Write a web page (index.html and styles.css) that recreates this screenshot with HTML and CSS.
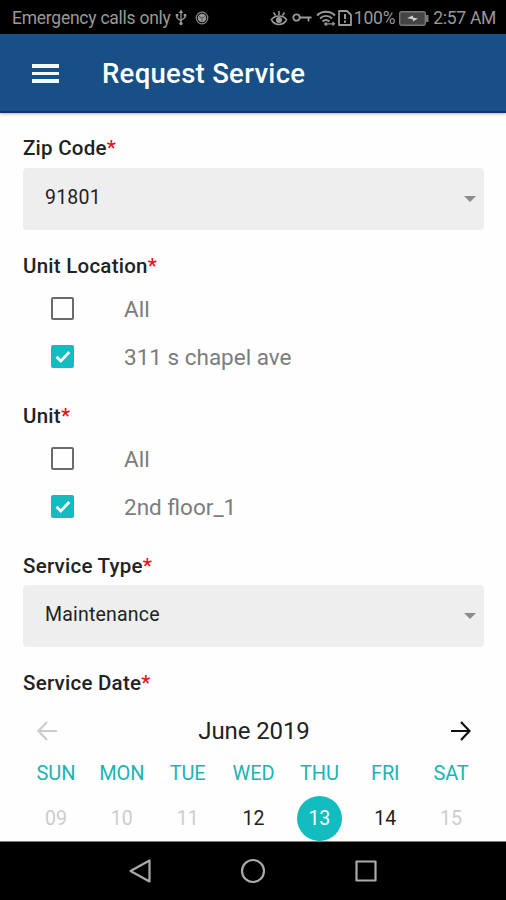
FILE: index.html
```html
<!DOCTYPE html>
<html lang="en">

<head>
    <meta charset="utf-8">
    <title>Request Service</title>
    <link rel="stylesheet" href="styles.css">
</head>

<body>
    <div class="status-bar">
        <span class="carrier">Emergency calls only</span>
        <svg class="usb" width="12" height="18" viewBox="0 0 12 18">
            <path d="M6 3v12M2 6v3l4 3M10 6v2.500l-4 3" fill="none" stroke="#999" stroke-width="1.300" />
            <path d="M6 0.500l2.200 3.500H3.800z" fill="#999" />
            <circle cx="6" cy="14.500" r="1.700" fill="#999" />
            <path d="M0.700 5h2.600v2.500H0.700zM8.700 5h2.600v2.500H8.700z" fill="#999" />
        </svg>
        <svg class="sync" width="14" height="14" viewBox="0 0 14 14">
            <circle cx="7" cy="7" r="5.800" fill="none" stroke="#888" stroke-width="1.200" />
            <circle cx="7" cy="7" r="4.300" fill="#999" />
            <path d="M4 5.500l3 1.500 3-1.500M7 7v3.500" fill="none" stroke="#444" stroke-width="0.800" />
        </svg>
        <svg class="eye" width="18" height="16" viewBox="0 0 18 16">
            <path d="M1 10c4-5.500 12-5.500 16 0M1.500 10c3.500 6 11.500 6 15 0M9 1v4M3.500 2.500l2 3M14.500 2.500l-2 3" fill="none" stroke="#999" stroke-width="1.500" />
            <circle cx="9" cy="10" r="3" fill="#999" />
        </svg>
        <svg class="key" width="20" height="12" viewBox="0 0 20 12">
            <circle cx="4.500" cy="5.500" r="3.200" fill="none" stroke="#999" stroke-width="1.800" />
            <path d="M8 5.500h11.500M16.500 5.500v4" fill="none" stroke="#999" stroke-width="1.800" />
        </svg>
        <svg class="wifi" width="20" height="17" viewBox="0 0 20 17">
            <path d="M1 5.500c5-5 13-5 18 0M4 8.500c3.500-3.500 8.500-3.500 12 0M6.500 11.500c2.200-2 4.800-2 7 0" fill="none" stroke="#999" stroke-width="1.900" />
            <circle cx="10" cy="14" r="1.800" fill="#999" />
            <path d="M12 13.800h6M16.500 12l2 1.800-2 1.800" fill="none" stroke="#999" stroke-width="1.200" />
        </svg>
        <svg class="sim" width="14" height="16" viewBox="0 0 14 16">
            <path d="M1 1h8l4 4v10H1z" fill="none" stroke="#999" stroke-width="1.800" stroke-linejoin="round" />
            <path d="M7 4v5M7 10.500v2.200" stroke="#999" stroke-width="2" />
        </svg>
        <span class="percent">100%</span>
        <svg class="battery" width="30" height="15" viewBox="0 0 30 15">
            <rect x="0.700" y="0.700" width="25.600" height="13.600" rx="2" fill="#444" stroke="#777" stroke-width="1.400" />
            <path d="M27 4h2.500v7H27z" fill="#777" />
            <path d="M8 7l6-2.500v2L19 7.500l-5 3v-2z" fill="#ccc" />
        </svg>
        <span class="clock">2:57 AM</span>
    </div>

    <header class="toolbar">
        <div class="menu"><i></i><i></i><i></i></div>
        <h1>Request Service</h1>
    </header>

    <main class="form">
        <div class="label"><span>Zip Code</span><b>*</b></div>
        <div class="select"><span>91801</span><i class="caret"></i></div>

        <div class="label"><span>Unit Location</span><b>*</b></div>
        <div class="options">
            <div class="option"><span class="box"></span>All</div>
            <div class="option">
                <span class="box checked"><svg width="23" height="23" viewBox="0 0 23 23"><path d="M5.500 11.800l4.300 4.200 8.500-9" /></svg></span>311 s chapel ave
            </div>
        </div>

        <div class="label"><span>Unit</span><b>*</b></div>
        <div class="options">
            <div class="option"><span class="box"></span>All</div>
            <div class="option">
                <span class="box checked"><svg width="23" height="23" viewBox="0 0 23 23"><path d="M5.500 11.800l4.300 4.200 8.500-9" /></svg></span>2nd floor_1
            </div>
        </div>

        <div class="label"><span>Service Type</span><b>*</b></div>
        <div class="select"><span>Maintenance</span><i class="caret"></i></div>

        <div class="label"><span>Service Date</span><b>*</b></div>
        <div class="month">
            <svg class="prev" width="20" height="20" viewBox="0 0 20 20"><path d="M20 10H1.500M10 1L1.500 10l8.500 9" /></svg>
            <span>June 2019</span>
            <svg class="next" width="20" height="20" viewBox="0 0 20 20"><path d="M0 10h18.500M10 1l8.500 9-8.500 9" /></svg>
        </div>
        <div class="week names">
            <span>SUN</span><span>MON</span><span>TUE</span><span>WED</span><span>THU</span><span>FRI</span><span>SAT</span>
        </div>
        <div class="week days">
            <span>09</span><span>10</span><span>11</span><span class="open">12</span><span class="selected">13</span><span class="open">14</span><span>15</span>
        </div>
    </main>

    <nav class="nav-bar">
        <svg width="24" height="26" viewBox="0 0 24 26"><path d="M21.500 2.500v21L2.500 13z" /></svg>
        <svg width="26" height="26" viewBox="0 0 26 26"><circle cx="13" cy="13" r="11" /></svg>
        <svg width="24" height="24" viewBox="0 0 24 24"><rect x="2.500" y="2.500" width="19" height="19" /></svg>
    </nav>
</body>

</html>
```

FILE: styles.css
```css
* {
    box-sizing: border-box;
}

body {
    margin: 0;
    height: 900px;
    display: flex;
    flex-direction: column;
    overflow: hidden;
    background: #fefefe;
    font-family: Roboto, "Liberation Sans", sans-serif;
    color: #222;
}

svg {
    display: block;
    flex: none;
}

.status-bar {
    height: 34px;
    flex: none;
    display: flex;
    align-items: center;
    padding: 2px 10px 0 12px;
    background: #000;
    color: #999;
    font-size: 17.5px;
    white-space: nowrap;
}

.carrier {
    width: 163px;
    letter-spacing: -0.25px;
}

.percent {
    letter-spacing: -0.2px;
}

.clock {
    letter-spacing: -0.3px;
}

.sync {
    margin-left: 8px;
}

.eye {
    margin-left: auto;
}

.key {
    margin-left: 4px;
}

.wifi {
    margin-left: 4px;
}

.sim {
    margin: 0 2px 0 2px;
}

.battery {
    margin: 0 4px;
}

.toolbar {
    height: 79px;
    flex: none;
    display: flex;
    align-items: center;
    padding-left: 32px;
    background: #174f86;
    border-bottom: 2px solid #0d3470;
    box-shadow: 0 1px 3px rgba(0, 0, 0, 0.3);
}

.menu {
    width: 27px;
    margin-top: 2px;
    display: grid;
    gap: 4px;
}

.menu i {
    height: 3.5px;
    background: #f4f8fc;
}

h1 {
    margin: 2px 0 0 43px;
    font-size: 27.5px;
    font-weight: 500;
    letter-spacing: 0.3px;
    color: #fff;
}

.form {
    flex: 1;
    min-height: 0;
    overflow: hidden;
    padding: 0 22px 0 23px;
}

.label {
    height: 39px;
    margin-top: 15px;
    line-height: 40px;
    font-size: 20.5px;
    font-weight: 500;
    letter-spacing: 0.25px;
}

.label:first-child {
    margin-top: 16px;
    line-height: 39px;
}

.label b {
    font-weight: 500;
    color: #e01515;
}

.select {
    height: 62px;
    display: flex;
    align-items: center;
    justify-content: space-between;
    margin-bottom: 16px;
    padding: 0 8px 4px 22px;
    border-radius: 4px;
    background: #eee;
    font-size: 19.5px;
    letter-spacing: 0.2px;
}

.caret {
    margin-top: 3px;
    border: 6.5px solid transparent;
    border-top-color: #8c8c8c;
    border-bottom: 0;
}

.option {
    height: 48px;
    display: flex;
    align-items: center;
    padding: 0 0 1px 28px;
    font-size: 22.5px;
    color: #7c7c7c;
}

.box {
    width: 23px;
    height: 23px;
    margin-right: 50px;
    border: 2px solid #6b6b6b;
    border-radius: 2px;
}

.checked {
    border: 0;
    background: #13bcbf;
}

.checked path {
    fill: none;
    stroke: #fff;
    stroke-width: 2.8;
}

.month {
    height: 58px;
    display: flex;
    align-items: center;
    justify-content: space-between;
    padding: 0 13px 0 14px;
    font-size: 24px;
    letter-spacing: -0.1px;
}

.month path {
    fill: none;
    stroke: #111;
    stroke-width: 2.2;
}

.month .prev path {
    stroke: #ccc;
}

.week {
    display: grid;
    grid-template-columns: repeat(7, 1fr);
    justify-items: center;
    align-items: center;
    text-align: center;
}

.names {
    height: 26px;
    font-size: 20px;
    letter-spacing: -0.1px;
    color: #1cb3b3;
}

.days {
    height: 64px;
    font-size: 19.5px;
    color: #ccc;
}

.open {
    color: #222;
}

.selected {
    width: 45px;
    height: 45px;
    line-height: 45px;
    border-radius: 50%;
    background: #13bcbf;
    color: #fff;
}

.nav-bar {
    height: 59px;
    flex: none;
    display: flex;
    align-items: center;
    justify-content: center;
    gap: 88px;
    border-top: 1px solid #777;
    background: #000;
}

.nav-bar svg * {
    fill: none;
    stroke: #aaa;
    stroke-width: 2.2;
    stroke-linejoin: round;
}
```
